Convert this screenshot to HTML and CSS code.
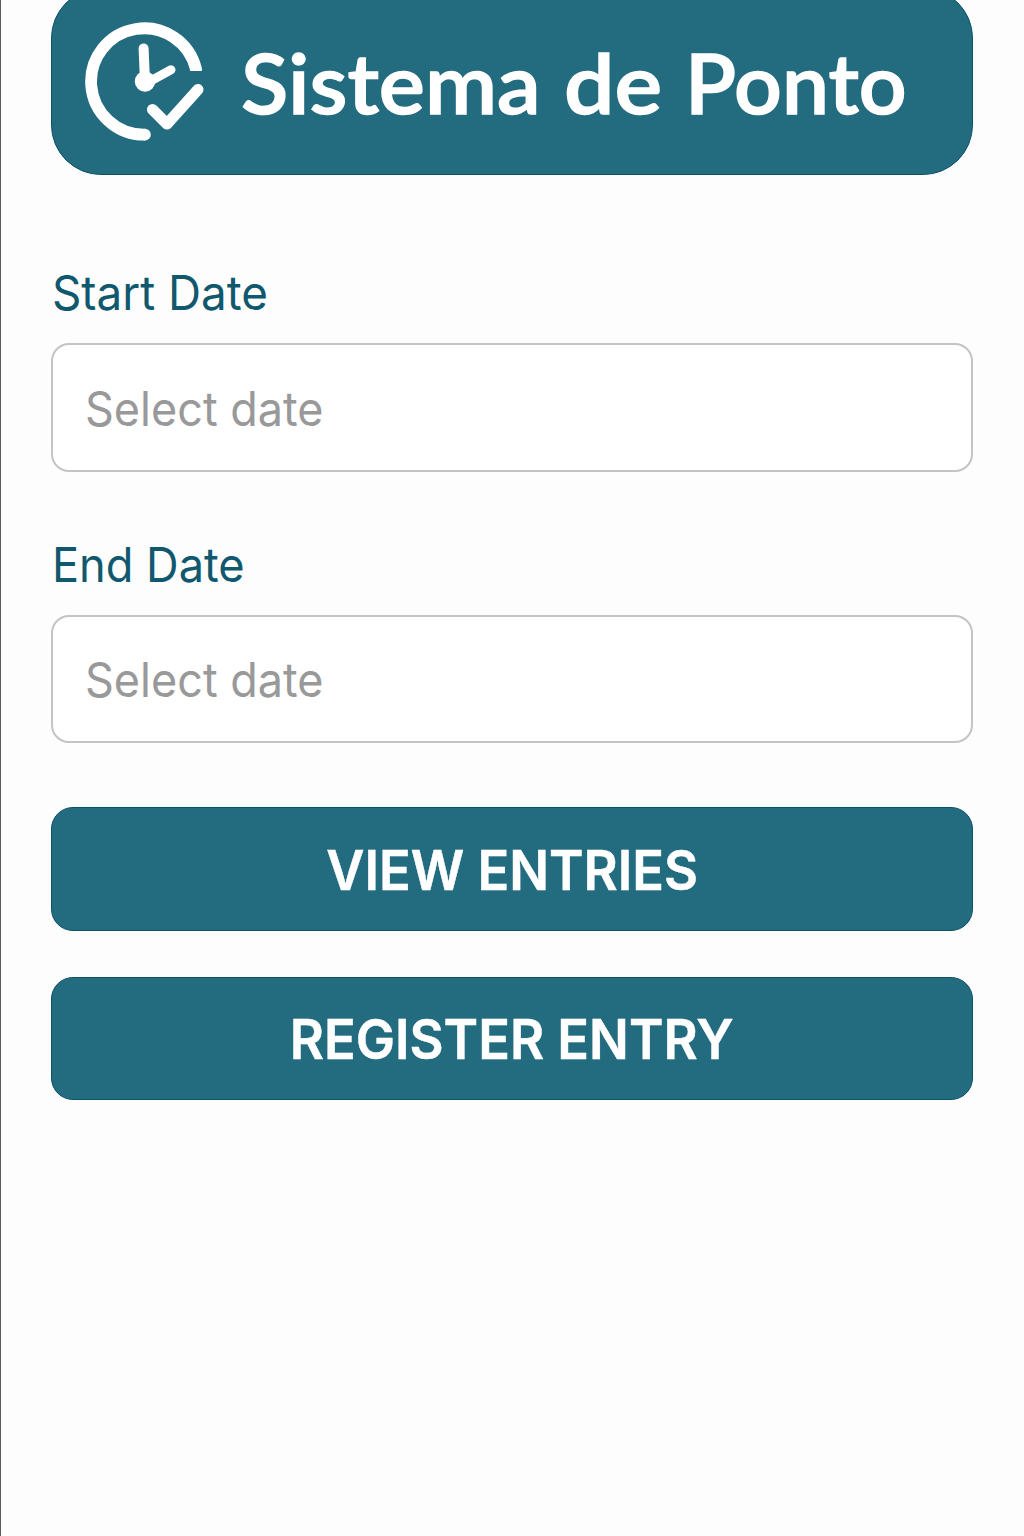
FILE: index.html
```html
<!DOCTYPE html>
<html lang="pt">
<head>
<meta charset="utf-8">
<title>Sistema de Ponto</title>
<link rel="stylesheet" href="styles.css">
</head>
<body>
<main class="screen">
  <header class="banner">
    <svg class="logo" viewBox="0.6 0.5 120 120" fill="none" stroke="#fff" aria-hidden="true">
      <path d="M111.6 49.500V47.500A53.200 53.200 0 1 0 60 113.200H61" stroke-width="11.8" stroke-linejoin="round"/>
      <circle cx="60.5" cy="113.2" r="5.9" fill="#fff" stroke="none"/>
      <path d="M59.2 27L60.6 60" stroke-width="10" stroke-linecap="round"/>
      <path d="M61.6 62L86.6 48.300" stroke-width="9" stroke-linecap="round"/>
      <circle cx="60.6" cy="60" r="10.2" fill="#fff" stroke="none"/>
      <path d="M68.1 88L82.6 102.500L113.6 68" stroke-width="11" stroke-linecap="round" stroke-linejoin="round"/>
    </svg>
    <h1 class="title"><span class="word word-first">Sistema</span> <span class="word word-middle">de</span> <span class="word word-last">Ponto</span></h1>
  </header>
  <form class="filters">
    <div class="field">
      <label class="label" for="start"><span class="label-text">Start Date</span></label>
      <div class="input" id="start"><span class="placeholder">Select date</span></div>
    </div>
    <div class="field">
      <label class="label" for="end"><span class="label-text label-end">End Date</span></label>
      <div class="input" id="end"><span class="placeholder">Select date</span></div>
    </div>
    <div class="actions">
      <button class="button button-view" type="button"><span class="button-text">VIEW ENTRIES</span></button>
      <button class="button button-register" type="button"><span class="button-text">REGISTER ENTRY</span></button>
    </div>
  </form>
</main>
</body>
</html>
```
FILE: styles.css
```css
* { box-sizing: border-box; }

body {
  margin: 0;
  background: #fdfdfd;
  font-family: Inter, "Liberation Sans", sans-serif;
}

.screen {
  height: 1536px;
  padding: 0 51px 0 50px;
  border-left: 1px solid #5c5c5e;
  overflow: hidden;
}

.banner {
  display: flex;
  align-items: flex-start;
  height: 187px;
  margin-top: -12px;
  padding: 33px 0 0 33px;
  border: 1px solid #0c5268;
  border-radius: 50px;
  background: #236b7f;
}

.logo {
  flex: none;
  width: 120px;
  height: 120px;
}

.title {
  margin: 10px 0 0 36px;
  color: #fff;
  font: 600 83px/100px Lato, sans-serif;
  white-space: nowrap;
  -webkit-text-stroke: 1.4px #fff;
}

.word {
  display: inline-block;
  transform-origin: left;
}

.word-first {
  transform: scaleX(1.046);
  margin-right: 16px;
}

.word-middle {
  transform: scaleX(1.08);
  margin-right: 9px;
}

.word-last {
  transform: scaleX(1.01);
}

.filters {
  display: flex;
  flex-direction: column;
}

.field {
  padding-top: 88px;
}

.field + .field {
  padding-top: 63px;
}

.label {
  display: block;
  height: 80px;
  padding-left: 1px;
  color: #10586d;
  font-size: 48px;
  line-height: 59px;
}

.label-text,
.placeholder,
.button-text {
  display: inline-block;
  white-space: nowrap;
  transform-origin: left;
}

.label-text {
  transform: scaleX(0.953);
}

.label-end {
  transform: scaleX(0.94);
}

.placeholder {
  transform: scaleX(0.937);
}

.input {
  display: flex;
  align-items: center;
  height: 129px;
  padding: 1px 0 0 32px;
  border: 2px solid #c4c4c4;
  border-radius: 18px;
  background: #fff;
  color: #999;
  font-size: 48px;
}

.field + .field .input {
  height: 128px;
}

.actions {
  display: flex;
  flex-direction: column;
  gap: 46px;
  padding-top: 64px;
}

.button {
  display: flex;
  align-items: center;
  justify-content: center;
  height: 124px;
  padding: 0;
  border: 1px solid #0c5268;
  border-radius: 22px;
  background: #236b7f;
  color: #fff;
  font: 600 54.500px/64px Inter, sans-serif;
  -webkit-text-stroke: 0.5px #fff;
}

.button-view {
  padding-top: 2px;
}

.button-register {
  height: 123px;
}

.button-text {
  transform: scaleX(0.962);
  transform-origin: center;
}
```
